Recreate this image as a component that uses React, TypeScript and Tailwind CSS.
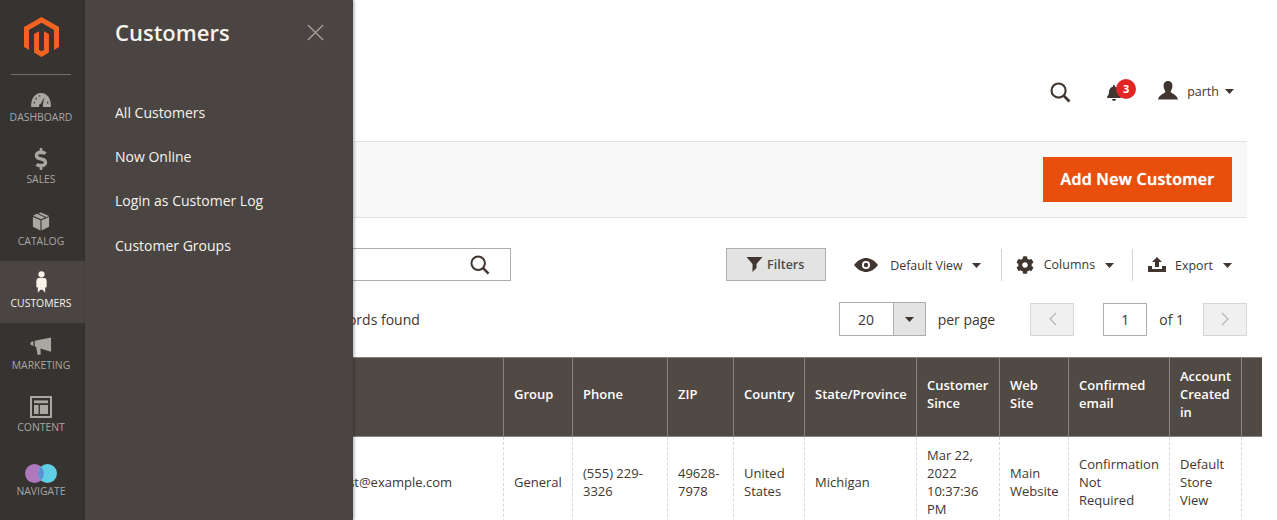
import { ReactNode } from 'react'
import { FaBell, FaCog, FaDollarSign } from 'react-icons/fa'

const NAV_ITEMS: { label: string; icon: ReactNode; active?: boolean }[] = [
  {
    label: 'Dashboard',
    icon: (
      <svg width="22" height="16" viewBox="0 0 24 18">
        <path d="M1 17 C0 8 5 1 12 1 C19 1 24 8 23 17 Z" fill="#aaa6a0" />
        <path d="M10.5 15.5 L16 5.5 L13.6 16.2 Z" fill="#373330" />
        <circle cx="12" cy="15.5" r="2.2" fill="#373330" />
        <circle cx="4.5" cy="12" r="0.9" fill="#373330" />
        <circle cx="6.5" cy="7.5" r="0.9" fill="#373330" />
        <circle cx="10.5" cy="4.5" r="0.9" fill="#373330" />
        <circle cx="19.5" cy="12" r="0.9" fill="#373330" />
      </svg>
    ),
  },
  { label: 'Sales', icon: <FaDollarSign size={22} color="#aaa6a0" /> },
  {
    label: 'Catalog',
    icon: (
      <svg width="18" height="21" viewBox="0 0 20 21">
        <path d="M1 5.6 L9.4 9.2 V20.4 L1 16.4 Z" fill="#aaa6a0" />
        <path d="M19 5.6 L10.6 9.2 V20.4 L19 16.4 Z" fill="#aaa6a0" />
        <path d="M7 1.4 L10 0.4 L19 4.4 L16 5.9 Z" fill="#aaa6a0" />
        <path d="M5.4 2 L1.2 4.2 L10 8 L14.4 6 Z" fill="#aaa6a0" />
      </svg>
    ),
  },
  {
    label: 'Customers',
    active: true,
    icon: (
      <svg width="11" height="24" viewBox="0 0 12 24">
        <circle cx="6" cy="3.6" r="3.4" fill="#f7f3eb" />
        <path d="M2.4 7.6 H9.6 Q11.6 8.4 11.6 10.6 V17.6 L10 18 L10 23.6 L7.2 20.4 H4.8 L2 23.6 L2 18 L0.4 17.6 V10.6 Q0.4 8.4 2.4 7.6 Z" fill="#f7f3eb" />
      </svg>
    ),
  },
  {
    label: 'Marketing',
    icon: (
      <svg width="22" height="19" viewBox="0 0 22 20">
        <path d="M0 5.4 L3 4.2 V9.4 L0 8.2 Z" fill="#aaa6a0" />
        <path d="M4.4 4 L21.6 0.6 V15.4 L10.4 12 L10.8 18.4 L7.4 19 L6 10.4 L4.4 10 Z" fill="#aaa6a0" />
      </svg>
    ),
  },
  {
    label: 'Content',
    icon: (
      <svg width="22" height="22" viewBox="0 0 22 22">
        <rect x="1" y="1" width="20" height="20" fill="none" stroke="#aaa6a0" strokeWidth="2" />
        <rect x="4" y="4.4" width="14" height="2.8" fill="#aaa6a0" />
        <rect x="4" y="9" width="4.6" height="9" fill="#aaa6a0" />
        <rect x="10" y="9" width="8" height="9" fill="#aaa6a0" />
      </svg>
    ),
  },
]

const COLUMNS: { head: ReactNode; cell: ReactNode; width: string }[] = [
  { head: '', cell: '', width: 'w-[50px]' },
  { head: 'ID', cell: '1', width: 'w-[50px]' },
  { head: 'Name', cell: 'Veronica Costello', width: 'w-[78px]' },
  { head: 'Email', cell: 'roni_cost@example.com', width: 'w-[210px]' },
  { head: 'Group', cell: 'General', width: 'w-[69px]' },
  { head: 'Phone', cell: '(555) 229-3326', width: 'w-[95px]' },
  { head: 'ZIP', cell: '49628-7978', width: 'w-[66px]' },
  { head: 'Country', cell: 'United States', width: 'w-[71px]' },
  { head: 'State/Province', cell: 'Michigan', width: 'w-[112px]' },
  { head: 'Customer Since', cell: 'Mar 22, 2022 10:37:36 PM', width: 'w-[83px]' },
  { head: 'Web Site', cell: 'Main Website', width: 'w-[69px]' },
  { head: 'Confirmed email', cell: 'Confirmation Not Required', width: 'w-[101px]' },
  { head: 'Account Created in', cell: 'Default Store View', width: 'w-[72px]' },
  { head: '', cell: '', width: 'w-[6px]' },
]

const SUBMENU = ['All Customers', 'Now Online', 'Login as Customer Log', 'Customer Groups']

function Caret({ className = '' }: { className?: string }) {
  return (
    <svg width="9" height="5" viewBox="0 0 9 5" className={className}>
      <path d="M0 0 H9 L4.5 5 Z" fill="#41362f" />
    </svg>
  )
}

function SearchIcon({ size = 22 }: { size?: number }) {
  return (
    <svg width={size} height={size} viewBox="0 0 22 22">
      <circle cx="9" cy="9" r="7.4" fill="none" stroke="#41362f" strokeWidth="2.2" />
      <path d="M14.4 14.4 L20.4 20.4" stroke="#41362f" strokeWidth="2.8" />
    </svg>
  )
}

export default function App() {
  return (
    <div className="relative flex h-[520px] w-[1277px] overflow-hidden bg-white font-['Open_Sans',sans-serif] text-[#41362f]">
      {/* Barra lateral */}
      <aside className="w-[85px] shrink-0 bg-[#373330]">
        <div className="flex h-[75px] justify-center pr-[2px] pt-[17px]">
          <svg width="35" height="40" viewBox="0 0 24 27.4">
            <path d="M12 0 L0 6.9 V20.6 L3.4 22.6 V8.9 L12 3.9 L20.6 8.9 V22.6 L24 20.6 V6.9 Z" fill="#f26322" />
            <path d="M13.7 22.5 L12 23.5 L10.3 22.5 V9.7 L6.9 11.7 V24.4 L12 27.4 L17.1 24.4 V11.7 L13.7 9.7 Z" fill="#f26322" />
          </svg>
        </div>
        <div className="ml-[11px] mr-[14px] -mt-px h-px bg-[#736e6b]" />
        {NAV_ITEMS.map(item => (
          <div key={item.label} className={`flex h-[62px] flex-col items-center pr-[3px] ${item.active ? 'bg-[#4a4542]' : ''}`}>
            <div className="flex h-[33px] items-end">{item.icon}</div>
            <span className={`mt-[2px] text-[10.4px] uppercase leading-[14px] ${item.active ? 'text-[#f7f3eb]' : 'text-[#aaa6a0]'}`}>{item.label}</span>
          </div>
        ))}
        <div className="mt-[2px] flex h-[62px] flex-col items-center pr-[3px]">
          <svg width="32" height="19" viewBox="0 0 32 19" className="mt-[15px]">
            <circle cx="9.5" cy="9.5" r="9.5" fill="#ad78bd" />
            <circle cx="22.5" cy="9.5" r="9.5" fill="#60cfe6" />
            <path d="M16 2.7 A9.5 9.5 0 0 1 16 16.3 A9.5 9.5 0 0 1 16 2.7 Z" fill="#5b8fd0" />
          </svg>
          <span className="mt-[1px] text-[10.4px] uppercase leading-[14px] text-[#aaa6a0]">Navigate</span>
        </div>
      </aside>

      {/* Conteúdo */}
      <main className="mr-[30px] min-w-0 flex-1">
        <div className="flex h-[141px] items-start justify-end pr-[13px] pt-[82px]">
          <SearchIcon size={21} />
          <div className="relative ml-[35px] mt-[3px]">
            <FaBell size={16} color="#41362f" />
            <span className="absolute -right-[14px] -top-[6px] flex h-5 w-5 items-center justify-center rounded-full bg-[#e22626] text-[11px] font-bold text-white">3</span>
          </div>
          <svg width="20" height="20" viewBox="0 0 20 20" className="ml-[36px] -mt-[1px]">
            <path d="M10 0 C6.8 0 5.4 2.4 5.6 5.4 C5.8 8 7 9.4 7.4 10.4 C7.4 12.4 1 13 0 18.6 H20 C19 13 12.6 12.4 12.6 10.4 C13 9.4 14.2 8 14.4 5.4 C14.6 2.4 13.2 0 10 0 Z" fill="#41362f" />
          </svg>
          <span className="ml-[9px] text-[12.5px] leading-[20px]">parth</span>
          <Caret className="ml-[6px] mt-[7px]" />
        </div>

        <div className="flex h-[77px] items-center justify-end border-y border-[#e3e3e3] bg-[#f8f8f8] pr-[15px]">
          <button className="h-[45px] w-[189px] bg-[#e84f0c] pb-[2px] text-[16px] font-semibold tracking-[0.3px] text-white [text-shadow:0_0_1px_#fff]">Add New Customer</button>
        </div>

        <div className="pl-[30px]">
          <div className="mt-[30px] flex h-[33px] items-center pr-[15px]">
            <div className="flex h-[33px] w-[396px] items-center justify-end border border-[#adadad] pr-[20px]">
              <SearchIcon size={20} />
            </div>
            <button className="ml-auto flex h-[33px] w-[100px] items-center justify-center gap-[4px] border border-[#adadad] bg-[#e3e3e3] pr-[2px] text-[12.5px] font-semibold text-[#514943]">
              <svg width="17" height="15" viewBox="0 0 16 15"><path d="M0 0 H16 L10 7 V11 L6 15 V7 Z" fill="#41362f" /></svg>
              <span className="mt-[2px]">Filters</span>
            </button>
            <svg width="24" height="14" viewBox="0 0 24 14" className="ml-[28px]">
              <path d="M0 7 C4 2 8 0 12 0 C16 0 20 2 24 7 C20 12 16 14 12 14 C8 14 4 12 0 7 Z" fill="#41362f" />
              <circle cx="12" cy="7" r="4" fill="#fff" />
              <circle cx="12" cy="7" r="2.2" fill="#41362f" />
            </svg>
            <span className="ml-[12px] mt-[3px] text-[12.4px]">Default View</span>
            <Caret className="ml-[9px] mt-[2px]" />
            <div className="ml-[20px] h-[32px] w-px bg-[#d1d1d1]" />
            <FaCog size={18} color="#41362f" className="ml-[14px]" />
            <span className="ml-[10px] mt-[1px] text-[12.5px]">Columns</span>
            <Caret className="ml-[10px] mt-[2px]" />
            <div className="ml-[18px] h-[32px] w-px bg-[#d1d1d1]" />
            <svg width="18" height="15" viewBox="0 0 18 15" className="ml-[15px]">
              <path d="M9 0 L14 5 H11 V10 H7 V5 H4 Z M0 9 H4 V12 H14 V9 H18 V15 H0 Z" fill="#41362f" />
            </svg>
            <span className="ml-[9px] mt-[3px] text-[12.4px]">Export</span>
            <Caret className="ml-[10px] mt-[2px]" />
          </div>

          <div className="mt-[21px] flex h-[34px] items-center">
            <span className="ml-[201px] text-[14px]">1 records found</span>
            <div className="ml-auto flex h-[34px] w-[87px] border border-[#adadad]">
              <span className="flex w-[53px] items-center justify-center text-[14px]">20</span>
              <span className="flex flex-1 items-center justify-center border-l border-[#adadad] bg-[#e3e3e3]"><Caret /></span>
            </div>
            <span className="ml-[12px] text-[14px]">per page</span>
            <button className="ml-[35px] flex h-[33px] w-[44px] items-center justify-center border border-[#d6d6d6] bg-[#f0f0f0]">
              <svg width="9" height="14" viewBox="0 0 9 14"><path d="M8 1 L2 7 L8 13" fill="none" stroke="#b8b8b8" strokeWidth="1.4" /></svg>
            </button>
            <span className="ml-[29px] flex h-[33px] w-[44px] items-center justify-center border border-[#adadad] text-[14px]">1</span>
            <span className="ml-[12px] text-[14px]">of 1</span>
            <button className="ml-[19px] flex h-[33px] w-[44px] items-center justify-center border border-[#d6d6d6] bg-[#f0f0f0]">
              <svg width="9" height="14" viewBox="0 0 9 14"><path d="M1 1 L7 7 L1 13" fill="none" stroke="#b8b8b8" strokeWidth="1.4" /></svg>
            </button>
          </div>

          <table className="mt-[21px] w-[1132px] table-fixed border-collapse">
            <thead>
              <tr className="h-[79px]">
                {COLUMNS.map((col, i) => (
                  <th key={i} className={`${col.width} border border-[#8a837f] bg-[#514943] pb-[6px] pl-[10.5px] pr-[9.5px] pt-0 text-left text-[13px] font-semibold leading-[18px] text-white first:border-l-0 last:border-r-0`}>{col.head}</th>
                ))}
              </tr>
            </thead>
            <tbody>
              <tr className="h-[90px]">
                {COLUMNS.map((col, i) => (
                  <td key={i} className="border-x border-dashed border-[#d6d6d6] py-0 pl-[10.5px] pr-[9.5px] text-[13px] leading-[18px] text-[#41362f] first:border-l-0 last:border-r-0">{col.cell}</td>
                ))}
              </tr>
            </tbody>
          </table>
        </div>
      </main>

      {/* Submenu aberto sobre o conteúdo */}
      <div className="absolute bottom-0 left-[85px] top-0 w-[268px] bg-[#4a4542] pl-[30px] shadow-[1px_0_3px_rgba(0,0,0,0.35)]">
        <h2 className="mt-[16px] text-[22px] font-semibold leading-[32px] text-[#f7f3eb]">Customers</h2>
        <svg width="17" height="17" viewBox="0 0 18 18" className="absolute left-[222px] top-[24px]">
          <path d="M1 1 L17 17 M17 1 L1 17" stroke="#a79d95" strokeWidth="1.5" />
        </svg>
        <ul className="mt-[43px]">
          {SUBMENU.map(item => (
            <li key={item} className="h-[44px] text-[14px] leading-[44px] text-[#f7f3eb] last:mt-px">{item}</li>
          ))}
        </ul>
      </div>
    </div>
  )
}
